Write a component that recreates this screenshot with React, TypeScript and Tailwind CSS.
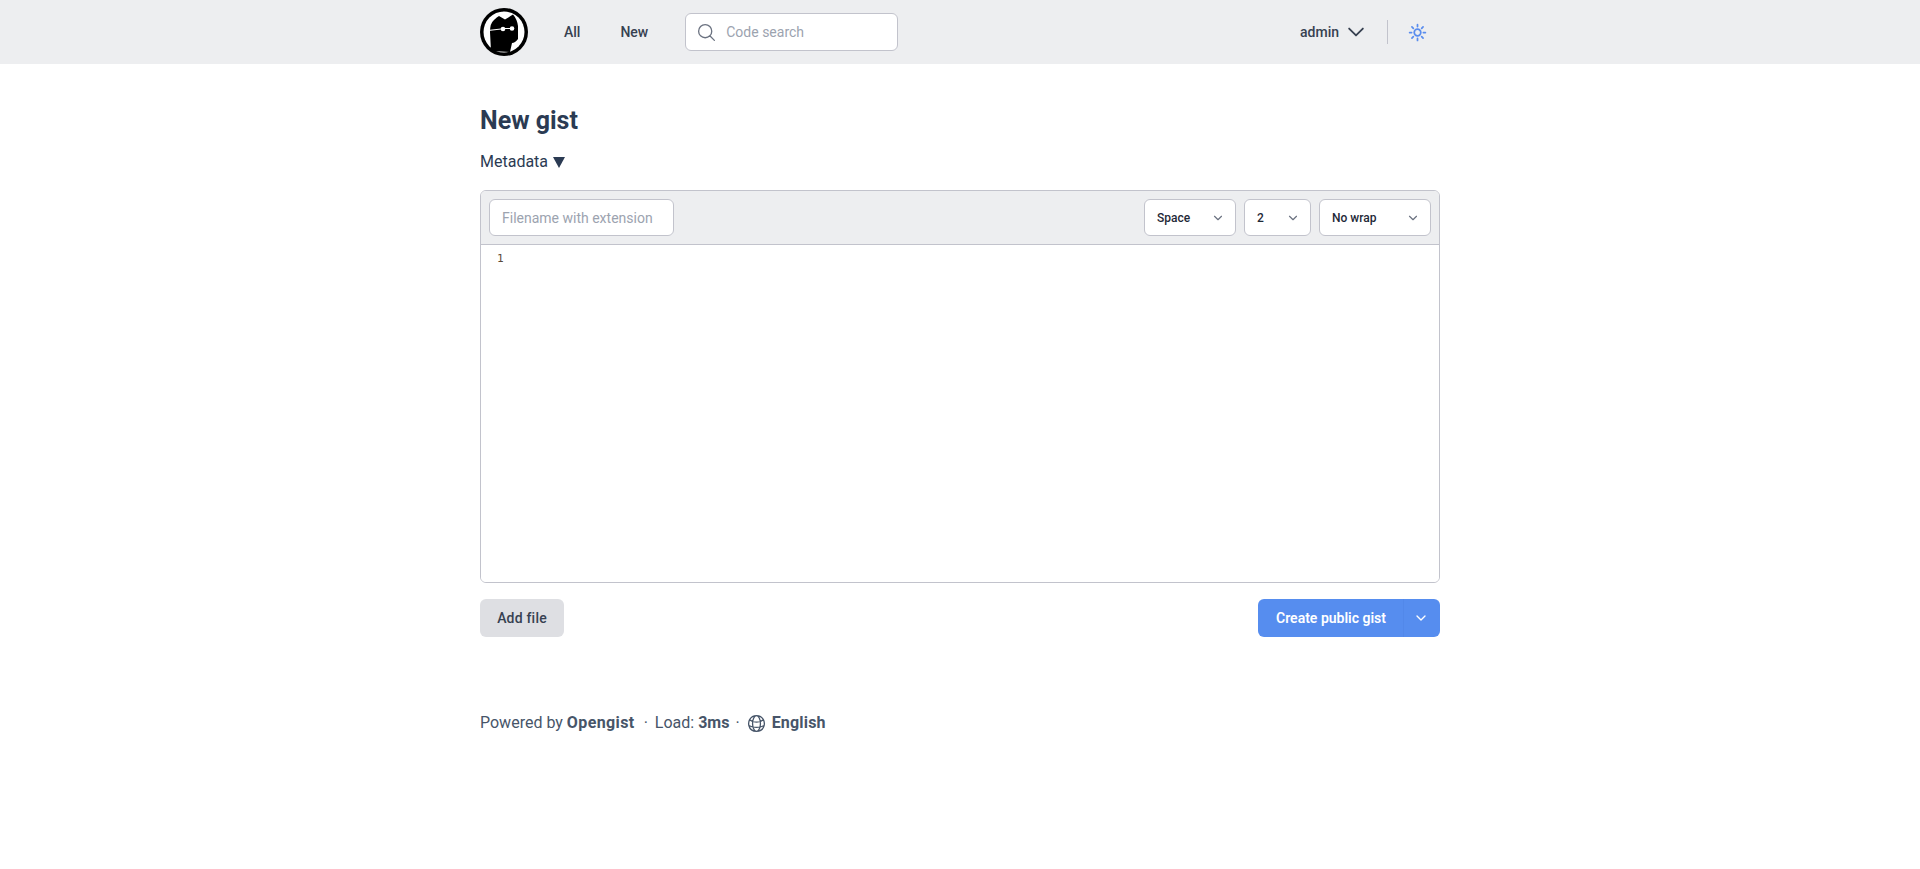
import React from "react";
import { ChevronDown } from "lucide-react";
import { HiOutlineChevronDown, HiOutlineGlobeAlt, HiOutlineMagnifyingGlass, HiOutlineSun } from "react-icons/hi2";

function Logo() {
  return (
    <svg viewBox="0 0 48 48" className="w-12 h-12 shrink-0">
      <circle cx="24" cy="24" r="24" fill="#000" />
      <circle cx="24" cy="24" r="20.5" fill="#fff" />
      <path d="M10 24 Q10 15 14 12 Q17 9 19 8 L25 11.5 Q29 9 33 6.5 Q37 11 38 18 L38 31 Q35 35 32 35 L30 44 L11 43 Z" fill="#000" />
      <path d="M8 22.5 L21 21" stroke="#fff" strokeWidth="1.1" />
      <path d="M25 20.5 L30 20.5" stroke="#fff" strokeWidth="1" />
      <circle cx="23" cy="21" r="2.3" fill="#fff" />
      <circle cx="32" cy="20.5" r="2.3" fill="#fff" />
    </svg>
  );
}

function Select({ label, width }: { label: string; width: string }) {
  return (
    <div className={`${width} h-[37px] flex items-center justify-between pl-[12px] pr-[10px] bg-white border border-[#c2c3cc] rounded-md text-xs font-medium text-[#1f2937]`}>
      <span>{label}</span>
      <ChevronDown size={14} className="text-[#6b7280]" />
    </div>
  );
}

export default function App() {
  return (
    <div className="min-h-[869px] bg-white text-[#334155] font-['Roboto','Noto_Sans',sans-serif]">
      {/* Navbar */}
      <header className="bg-[#edeef0] h-16">
        <div className="max-w-5xl mx-auto px-8 h-full flex items-center justify-between">
          <div className="flex items-center">
            <Logo />
            <nav className="flex items-center ml-[24px] text-sm font-medium text-[#374151]">
              <a className="px-[12px] py-2">All</a>
              <a className="px-[20px] ml-[8px] py-2">New</a>
            </nav>
            <div className="ml-[17px] w-[213px] h-[38px] flex items-center bg-white border border-[#c2c3cc] rounded-md pl-[10px]">
              <HiOutlineMagnifyingGlass size={21} className="text-[#6b7280]" />
              <span className="ml-[9px] text-sm text-[#9ca3af]">Code search</span>
            </div>
          </div>
          <div className="flex items-center">
            <span className="text-sm font-medium text-[#374151]">admin</span>
            <HiOutlineChevronDown size={22} strokeWidth={2} className="ml-[6px] text-[#374151]" />
            <div className="w-px h-6 bg-[#c2c3cc] ml-[20px] mr-[19px]" />
            <HiOutlineSun size={21} strokeWidth={2} className="text-[#5a8dee] mr-[12px]" />
          </div>
        </div>
      </header>

      <main className="max-w-5xl mx-auto px-8 pt-[41px]">
        <h1 className="text-[25px] leading-[32px] font-bold text-[#2b3b53]">New gist</h1>
        <div className="mt-[13px] flex items-center text-base leading-6 text-[#2b3b53]">
          Metadata
          <span className="ml-[5px] w-0 h-0 border-l-[6.5px] border-r-[6.5px] border-t-[11px] border-l-transparent border-r-transparent border-t-[#2b3b53]" />
        </div>

        {/* Editor */}
        <div className="mt-[16px] h-[393px] border border-[#c2c3cc] rounded-md overflow-hidden flex flex-col">
          <div className="h-[54px] shrink-0 bg-[#edeef0] border-b border-[#c2c3cc] flex items-center justify-between px-[8px]">
            <div className="w-[185px] h-[37px] flex items-center bg-white border border-[#c2c3cc] rounded-md px-[12px] text-sm text-[#9ca3af]">
              Filename with extension
            </div>
            <div className="flex items-center gap-[8px]">
              <Select label="Space" width="w-[92px]" />
              <Select label="2" width="w-[67px]" />
              <Select label="No wrap" width="w-[112px]" />
            </div>
          </div>
          <div className="flex-1 bg-white pt-[6px] pl-[16px] font-['DejaVu_Sans_Mono',monospace] text-[11px] leading-[16px] text-[#5a4a3a]">
            1
          </div>
        </div>

        {/* Actions */}
        <div className="mt-[16px] flex items-center justify-between">
          <button className="h-[38px] w-[84px] rounded-md bg-[#dedfe3] text-sm tracking-[0.2px] font-medium text-[#374151]">Add file</button>
          <div className="h-[38px] flex rounded-md bg-[#568def] text-white text-sm font-semibold overflow-hidden">
            <button className="pl-[18px] pr-[17px] border-r border-[#5288ea]">Create public gist</button>
            <div className="w-[36px] flex items-center justify-center pr-[2px]">
              <ChevronDown size={16} />
            </div>
          </div>
        </div>

        {/* Footer */}
        <footer className="mt-[74px] flex items-center text-base leading-6 text-[#475569] whitespace-pre">
          <span>Powered by </span>
          <span className="font-bold tracking-[0.4px]">Opengist</span>
          <span className="ml-[9px]">·</span>
          <span className="ml-[7px]">Load: </span>
          <span className="font-bold">3ms</span>
          <span className="ml-[6px]">·</span>
          <HiOutlineGlobeAlt size={21} className="ml-[6px]" />
          <span className="ml-[5px] font-bold tracking-[0.2px]">English</span>
        </footer>
      </main>
    </div>
  );
}
